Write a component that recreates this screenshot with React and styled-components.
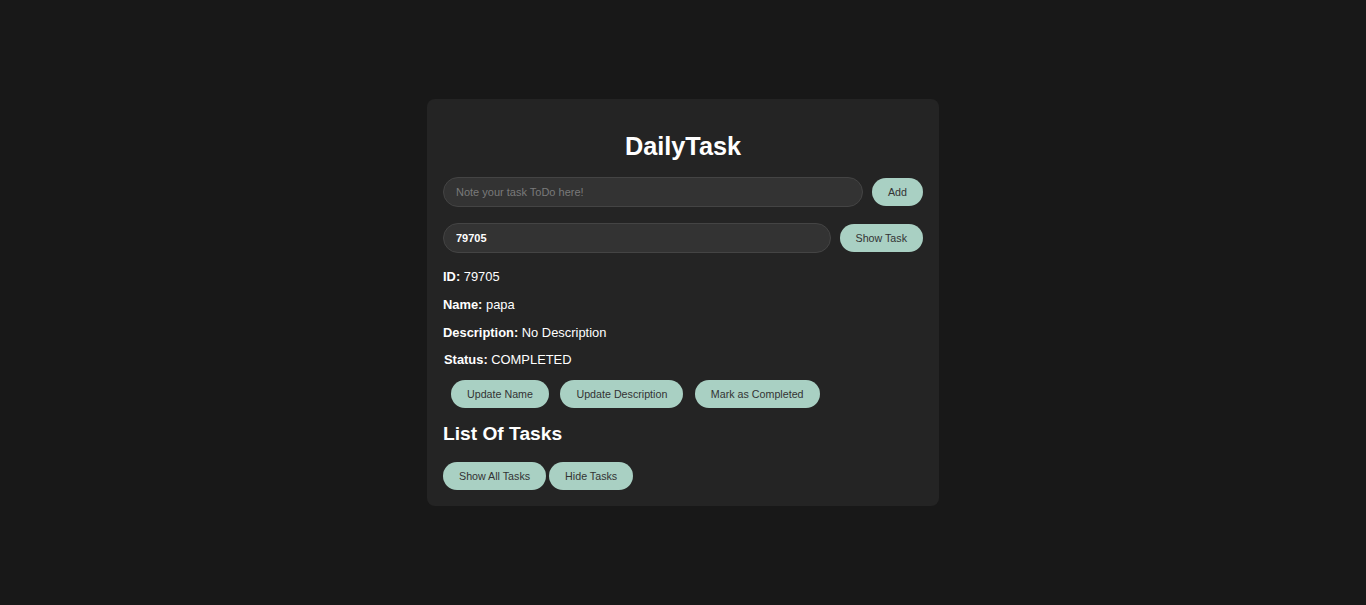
import styled, { createGlobalStyle } from "styled-components";

const GlobalStyle = createGlobalStyle`
body {
    margin: 0;
    background: #181818;
    font-family: "Liberation Sans", Arial, sans-serif;
    color: #fff;
}
`

const Page = styled.div`
display: flex;
align-items: center;
justify-content: center;
min-height: 100vh;
`

const Card = styled.div`
width: 480px;
padding: 16px;
background: #242424;
border-radius: 8px;
`

const Title = styled.h1`
margin: 16px 0 16px;
text-align: center;
font-size: 25.3px;
line-height: 30px;
font-weight: bold;
color: #fff;
`

const Row = styled.div`
display: flex;
align-items: center;
gap: 9px;
margin-bottom: ${(p) => p.$mb || 0}px;
`

const Input = styled.input`
flex: 1;
height: 30px;
box-sizing: border-box;
padding: 0 12px;
background: #333333;
border: 1px solid #444444;
border-radius: 15px;
color: #fff;
font-family: "Liberation Sans", Arial, sans-serif;
font-size: 11px;
font-weight: ${(p) => (p.$bold ? "bold" : "normal")};
outline: none;

&::placeholder {
    color: #7a7a7a;
}
`

const Button = styled.button`
height: 28px;
padding: 0 16px;
background: #a9d0c3;
border: none;
border-radius: 14px;
color: #333;
font-family: "Liberation Sans", Arial, sans-serif;
font-size: 10.7px;
cursor: pointer;
white-space: nowrap;
`

const Info = styled.p`
margin: 0 0 12px;
padding-left: ${(p) => p.$indent || 0}px;
font-size: 12.9px;
line-height: 16px;

b {
    font-weight: bold;
}
`

const Actions = styled.div`
display: flex;
gap: 11.5px;
margin: 12px 0 0 8px;
`

const SubTitle = styled.h2`
margin: 14px 0 16px;
font-size: 19.2px;
line-height: 24px;
font-weight: bold;
`

const ListButtons = styled.div`
display: flex;
gap: 3px;
`

function App() {
    return (
        <Page>
            <GlobalStyle />
            <Card>
                <Title>DailyTask</Title>
                <Row $mb={16}>
                    <Input placeholder="Note your task ToDo here!" />
                    <Button>Add</Button>
                </Row>
                <Row $mb={16}>
                    <Input $bold defaultValue="79705" />
                    <Button>Show Task</Button>
                </Row>
                <Info><b>ID:</b> 79705</Info>
                <Info><b>Name:</b> papa</Info>
                <Info><b>Description:</b> No Description</Info>
                <Info $indent={1} style={{ marginTop: -1, marginBottom: 0 }}><b>Status:</b> COMPLETED</Info>
                <Actions>
                    <Button>Update Name</Button>
                    <Button>Update Description</Button>
                    <Button>Mark as Completed</Button>
                </Actions>
                <SubTitle>List Of Tasks</SubTitle>
                <ListButtons>
                    <Button>Show All Tasks</Button>
                    <Button>Hide Tasks</Button>
                </ListButtons>
            </Card>
        </Page>
    )
}

export default App;
